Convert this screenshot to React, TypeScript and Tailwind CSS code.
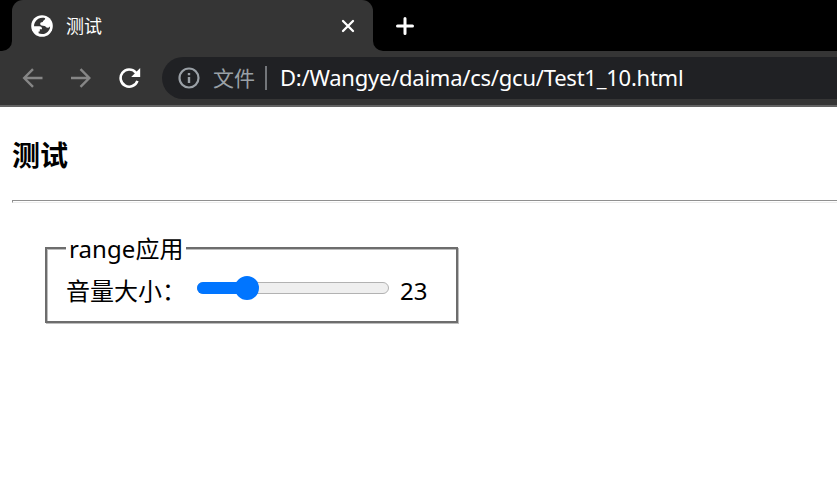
import { useState } from "react";

function Globe() {
  return (
    <svg width="22" height="22" viewBox="0 0 22 22" className="block shrink-0">
      <circle cx="11" cy="11" r="10.800" fill="#fff" />
      <path
        d="M14.200 3.200C10.500 2 6.200 3.400 4 7.200C3.300 8.600 2.900 9.800 3 11.200H8.300C10 11.300 11.200 12.400 11 14.200H8.800V16.600H7.600V18.300C9.800 19.400 12.600 19.400 14.700 18.200C17.500 16.700 19.200 14.200 19.100 11.200C18.100 12.500 16.900 12.900 15.700 12.600C14.800 12.300 14.700 11.100 13.500 10.900C11.500 10.700 9.200 10.600 9.200 8.900C9.200 7.600 10.200 7.100 11.700 7C11.700 5.400 14.200 5.300 14.200 3.200Z"
        fill="#353535"
      />
    </svg>
  );
}

function TabStrip() {
  return (
    <div className="flex h-[51px] bg-black">
      <div className="h-[51px] w-3 bg-[#353535]">
        <div className="h-full rounded-br-[10px] bg-black" />
      </div>
      <div className="bg-black">
        <div className="flex h-[51px] w-[361px] items-center rounded-t-[11px] bg-[#353535] pr-[18px] pl-[19px]">
          <Globe />
          <span className="ml-[13px] flex-1 text-[18px] leading-6 text-white">测试</span>
          <svg width="14" height="14" viewBox="0 0 14 14" stroke="#fff" strokeWidth="2.300" strokeLinecap="round">
            <path d="M2 2 12 12M12 2 2 12" />
          </svg>
        </div>
      </div>
      <div className="flex-1 bg-[#353535]">
        <div className="flex h-full items-center rounded-bl-[10px] bg-black pl-[22px]">
          <svg width="20" height="20" viewBox="0 0 20 20" stroke="#fff" strokeWidth="3" strokeLinecap="round">
            <path d="M10 2.500v15M2.500 10h15" />
          </svg>
        </div>
      </div>
    </div>
  );
}

function Toolbar() {
  return (
    <div className="flex h-14 items-center border-b-2 border-[#636363] bg-[#353535] pl-[22px]">
      <svg width="22" height="20" viewBox="0 0 22 20" fill="none" stroke="#868686" strokeWidth="2.400">
        <path d="M20.500 10H2.500M11 1.200 2.200 10 11 18.800" />
      </svg>
      <svg width="22" height="20" viewBox="0 0 22 20" fill="none" stroke="#868686" strokeWidth="2.400" className="ml-[26px]">
        <path d="M1 10h18M10.500 1.200 19.300 10l-8.800 8.800" />
      </svg>
      <svg width="22" height="22" viewBox="0 0 22 22" className="ml-[27px]">
        <path d="M18.400 13.800A8.600 8.600 0 1 1 16.600 5.300L18.200 7" fill="none" stroke="#fff" strokeWidth="2.600" />
        <path d="M21.200 1v9h-9z" fill="#fff" />
      </svg>
      <div className="ml-[21px] flex h-[42px] flex-1 items-center rounded-l-full bg-[#202124] pl-4">
        <svg width="22" height="22" viewBox="0 0 22 22" fill="none" stroke="#9aa0a6">
          <circle cx="11" cy="11" r="9.500" strokeWidth="2.200" />
          <path d="M11 10v6M11 6v2.200" strokeWidth="2.400" />
        </svg>
        <span className="ml-[13px] w-[42px] text-[21px] leading-8 text-[#9aa0a6]">文件</span>
        <div className="ml-[10px] h-6 w-0.5 bg-[#73767a]" />
        <span className="-mt-0.5 ml-[13px] text-[22px] leading-8 tracking-[-0.240px] whitespace-nowrap text-white">
          D:/Wangye/daima/cs/gcu/Test1_10.html
        </span>
      </div>
    </div>
  );
}

function Range({ value, onChange }: { value: number; onChange: (v: number) => void }) {
  const position = 12 + (value / 100) * 168;
  return (
    <div className="relative h-3 w-[192px] rounded-full border border-[#b2b2b2] bg-[#efefef]">
      <div className="absolute -top-px -left-px h-3 rounded-full bg-[#0075ff]" style={{ width: position + 6 }} />
      <div className="absolute -top-[7px] size-6 rounded-full bg-[#0075ff]" style={{ left: position - 13.6 }} />
      <input
        type="range"
        aria-label="音量大小"
        value={value}
        onChange={(e) => onChange(Number(e.target.value))}
        className="absolute -top-2 left-0 h-6 w-full opacity-0"
      />
    </div>
  );
}

export default function App() {
  const [volume, setVolume] = useState(23);
  return (
    <div className="h-[499px] overflow-hidden bg-white font-['Noto_Sans','Noto_Sans_CJK_SC',sans-serif] text-black">
      <TabStrip />
      <Toolbar />
      <main className="pt-7 pl-3">
        <h3 className="text-[28px] leading-10 font-bold">测试</h3>
        <div className="mt-[25px] h-[3px] border-t border-b border-l border-t-[#909090] border-b-[#ededed] border-l-[#909090]" />
        <fieldset className="mt-[29px] ml-[33px] h-[91px] w-[413px] border-2 border-[#6d6d6d] px-[19px] shadow-[1px_1px_0_#bdbdbd,inset_1px_1px_0_#bdbdbd]">
          <legend className="h-8 w-[120px] bg-white px-[3px] text-2xl leading-[34px] tracking-[0.080px] whitespace-nowrap">
            range应用
          </legend>
          <div className="mt-[11px] flex h-8 items-center text-2xl leading-8">
            <span className="w-[120px] whitespace-nowrap">音量大小：</span>
            <div className="-mt-1.5 ml-[11px]">
              <Range value={volume} onChange={setVolume} />
            </div>
            <span className="ml-[11px]">{volume}</span>
          </div>
        </fieldset>
      </main>
    </div>
  );
}
